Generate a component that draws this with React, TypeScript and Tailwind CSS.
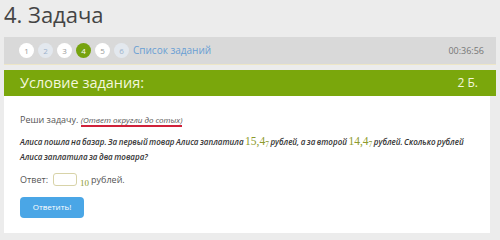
const pages = [
  { n: 1, kind: "done" },
  { n: 2, kind: "todo" },
  { n: 3, kind: "done" },
  { n: 4, kind: "current" },
  { n: 5, kind: "done" },
  { n: 6, kind: "todo" },
];

const Num = ({ value }: { value: string }) => (
  <span className="font-['Liberation_Serif',serif] not-italic font-normal tracking-normal text-[11.5px] text-[#8c9a2c]">
    {value}
    <sub className="text-[7.5px] -bottom-[0.2em]">7</sub>
  </span>
);

export default function App() {
  return (
    <div className="w-[500px] h-[240px] bg-[#ececec] font-['Open_Sans',sans-serif] overflow-hidden px-[4px]">
      {/* title */}
      <h1 className="text-[22px] leading-none text-[#444] pt-[3px] h-[37px]">4. Задача</h1>

      {/* pagination bar */}
      <div className="h-[28px] bg-[#d9d9d9] border-b border-[#ede6c8] flex items-center pl-[15px] pr-[12px]">
        <div className="flex items-center gap-[4px]">
          {pages.map((p) => (
            <span
              key={p.n}
              className={
                p.kind === "current"
                  ? "w-[15px] h-[15px] rounded-full bg-[#76a30e] text-white text-[8px] flex items-center justify-center"
                  : p.kind === "done"
                  ? "w-[15px] h-[15px] rounded-full bg-white text-[#999] text-[8px] flex items-center justify-center"
                  : "w-[15px] h-[15px] rounded-full bg-[#e3e8ee] text-[#9db3cc] text-[8px] flex items-center justify-center"
              }
            >
              {p.n}
            </span>
          ))}
        </div>
        <span className="ml-[4px] text-[10px] text-[#6a9fd4]">Список заданий</span>
        <span className="ml-auto text-[9px] text-[#777]">00:36:56</span>
      </div>

      {/* task card */}
      <div className="mt-[5px] w-[492px]">
        <div className="h-[26px] bg-[#7aa70c] flex items-center justify-between pl-[16px] pr-[16px]">
          <span className="text-[14.5px] text-[#f4f7dc]">Условие задания:</span>
          <span className="text-[12px] text-[#f4f7dc] mr-[2px]">2 Б.</span>
        </div>
        <div className="bg-white h-[137px] pl-[16px] pr-[10px] pt-[17px] text-[#555] mr-[6px]">
          <p className="text-[9px] leading-[14px]">
            Реши задачу.{" "}
            <span className="italic text-[8px] border-b-2 border-[#d0213a]">(Ответ округли до сотых)</span>
          </p>
          <p className="mt-[7px] text-[8px] [word-spacing:-0.6px] leading-[15px] font-semibold italic text-[#333]">
            <span className="whitespace-nowrap">
              Алиса пошла на базар. За первый товар Алиса заплатила <Num value="15,4" /> рублей, а за второй{" "}
              <Num value="14,4" /> рублей. Сколько рублей
            </span>
            <br />
            Алиса заплатила за два товара?
          </p>
          <div className="mt-[5px] flex items-center text-[9px]">
            <span>Ответ:</span>
            <span className="ml-[5px] w-[24px] h-[13px] border border-[#d8d3a8] rounded-[3px] bg-white" />
            <span className="ml-[3px] mt-[8px] font-['Liberation_Serif',serif] text-[9px] text-[#8c9a2c]">10</span>
            <span className="ml-[2px]">рублей.</span>
          </div>
          <button className="mt-[6px] w-[64px] h-[21px] rounded-[4px] bg-[#4aa6e6] text-white text-[8px]">
            Ответить!
          </button>
        </div>
      </div>
    </div>
  );
}
